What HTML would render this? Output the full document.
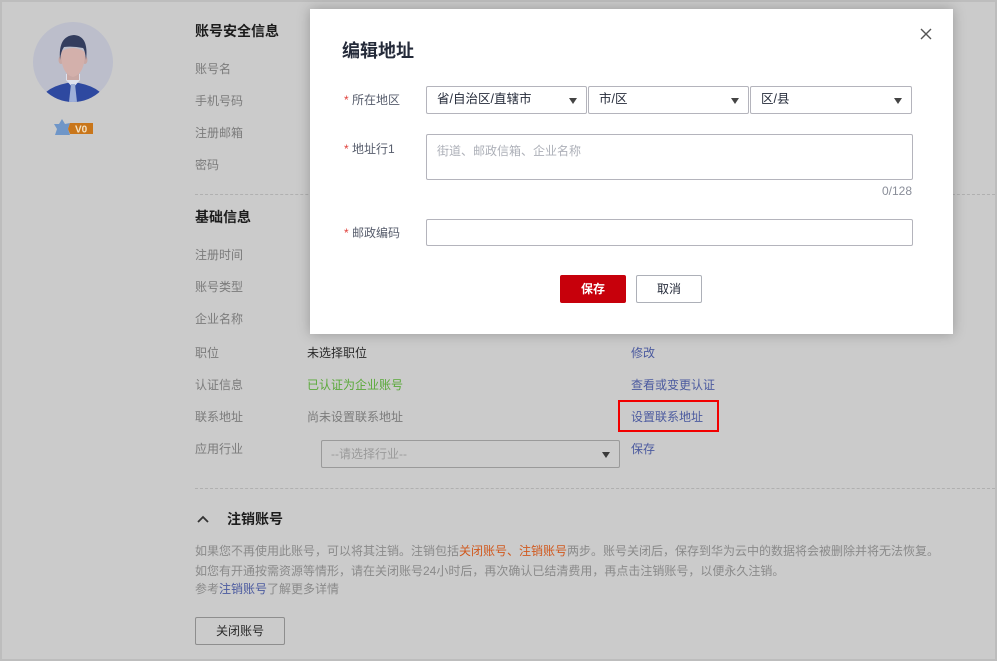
<!DOCTYPE html>
<html><head><meta charset="utf-8">
<style>
*{margin:0;padding:0;box-sizing:border-box}
body{width:997px;height:661px;overflow:hidden;background:#cbcbcb;font-family:"Liberation Sans","Noto Sans CJK SC",sans-serif;font-size:12px;position:relative;color:#7b7b7b}
.frame{position:absolute;left:0;top:0;width:997px;height:661px;border:2px solid #bdbdbd}
.a{position:absolute;white-space:nowrap;line-height:16px}
.h{color:#1c1c1c;font-weight:bold;font-size:14px}
.v{color:#2a2a2a}
.l{color:#4b5a9f}
.dash{position:absolute;height:0;border-top:1px dashed #b0b0b0}
.modal{position:absolute;left:310px;top:9px;width:643px;height:325px;background:#fff;box-shadow:0 0 12px rgba(0,0,0,.25)}
.m{position:absolute;white-space:nowrap;line-height:16px}
.box{position:absolute;border:1px solid #b4b4bc;border-radius:2px;background:#fff}
.sel{color:#252b3a;padding-left:10px;line-height:25px;font-size:12.5px}
.tri{position:absolute;right:9px;top:11px;width:0;height:0;border-left:4.5px solid transparent;border-right:4.5px solid transparent;border-top:6px solid #444}
.star{color:#e0413c}
.lbl{color:#575d6c}
</style></head><body>
<div class="frame"></div>
<svg style="position:absolute;left:33px;top:22px" width="80" height="80" viewBox="0 0 80 80">
<defs><clipPath id="c"><circle cx="40" cy="40" r="40"/></clipPath></defs>
<circle cx="40" cy="40" r="40" fill="#bcbecb"/>
<g clip-path="url(#c)">
<path d="M6 82 Q10 64 40 60 Q70 64 74 82Z" fill="#2e49a0"/>
<path d="M33 58 L40 66 L47 58 L47 52 L33 52Z" fill="#dfe2ee"/>
<path d="M38 62 L42 62 L44 80 L36 80Z" fill="#9fb0d8"/>
<rect x="34" y="44" width="12" height="14" fill="#c9a8a4"/>
<ellipse cx="28" cy="38" rx="2.5" ry="4" fill="#c9a8a4"/>
<ellipse cx="52" cy="38" rx="2.5" ry="4" fill="#c9a8a4"/>
<path d="M28 30 Q28 52 40 55 Q52 52 52 30 Q46 26 40 26 Q32 26 28 30Z" fill="#d3b0ab"/>
<path d="M27 38 Q25 14 41 13 Q56 14 53 38 Q52 28 50 26 Q40 24 31 25 Q28 29 27 38Z" fill="#333d5e"/>
</g></svg>
<svg style="position:absolute;left:53px;top:119px" width="42" height="17">
<path d="M1 5 L6 5 L9 0 L12 5 L17 4 L15 10 L17 16 L2 16 L4 10Z" fill="#6f96c8"/>
<path d="M17 4 L40 4 L40 15 L17 15 L15 10Z" fill="#c9761a"/>
<text x="22" y="13.5" font-family="Liberation Sans" font-weight="bold" font-size="10" fill="#f4e2c4">V0</text>
</svg>

<div class="a h" style="left:195px;top:23px">账号安全信息</div>
<div class="a" style="left:195px;top:61px">账号名</div>
<div class="a" style="left:195px;top:93px">手机号码</div>
<div class="a" style="left:195px;top:125px">注册邮箱</div>
<div class="a" style="left:195px;top:157px">密码</div>
<div class="dash" style="left:195px;top:194px;width:800px"></div>
<div class="a h" style="left:195px;top:209px">基础信息</div>
<div class="a" style="left:195px;top:247px">注册时间</div>
<div class="a" style="left:195px;top:279px">账号类型</div>
<div class="a" style="left:195px;top:311px">企业名称</div>
<div class="a" style="left:195px;top:345px">职位</div>
<div class="a v" style="left:307px;top:345px">未选择职位</div>
<div class="a l" style="left:631px;top:345px">修改</div>
<div class="a" style="left:195px;top:377px">认证信息</div>
<div class="a" style="left:307px;top:377px;color:#5aa93a">已认证为企业账号</div>
<div class="a l" style="left:631px;top:377px">查看或变更认证</div>
<div class="a" style="left:195px;top:409px">联系地址</div>
<div class="a" style="left:307px;top:409px">尚未设置联系地址</div>
<div class="a l" style="left:631px;top:409px">设置联系地址</div>
<div style="position:absolute;left:618px;top:400px;width:101px;height:32px;border:2px solid #f20000"></div>
<div class="a" style="left:195px;top:441px">应用行业</div>
<div style="position:absolute;left:321px;top:440px;width:299px;height:28px;border:1px solid #9a9a9a;border-radius:2px;color:#9a9a9a;padding-left:9px;line-height:26px">--请选择行业--<div class="tri" style="top:11px;border-top-color:#3a3a3a"></div></div>
<div class="a l" style="left:631px;top:441px">保存</div>
<div class="dash" style="left:195px;top:488px;width:800px"></div>
<svg style="position:absolute;left:197px;top:514px" width="12" height="10"><path d="M1 8 L6 3 L11 8" stroke="#333" stroke-width="1.8" fill="none"/></svg>
<div class="a h" style="left:227px;top:511px">注销账号</div>
<div class="a" style="left:195px;top:543px;color:#8a8a8a">如果您不再使用此账号，可以将其注销。注销包括<span style="color:#d0591e">关闭账号、注销账号</span>两步。账号关闭后，保存到华为云中的数据将会被删除并将无法恢复。</div>
<div class="a" style="left:195px;top:563px;color:#8a8a8a">如您有开通按需资源等情形，请在关闭账号24小时后，再次确认已结清费用，再点击注销账号，以便永久注销。</div>
<div class="a" style="left:195px;top:581px;color:#8a8a8a">参考<span style="color:#4b5a9f">注销账号</span>了解更多详情</div>
<div style="position:absolute;left:195px;top:617px;width:90px;height:28px;border:1px solid #8e8e8e;border-radius:2px;color:#2a2a2a;text-align:center;line-height:26px">关闭账号</div>

<div class="modal">
<div class="m" style="left:32px;top:31px;font-size:18px;line-height:22px;font-weight:bold;color:#252b3a">编辑地址</div>
<svg style="position:absolute;left:610px;top:19px" width="12" height="12"><path d="M1 1L11 11M11 1L1 11" stroke="#555" stroke-width="1.4"/></svg>
<div class="m lbl" style="left:34px;top:83px"><span class="star">*</span> 所在地区</div>
<div class="box sel" style="left:116px;top:77px;width:161px;height:28px">省/自治区/直辖市<div class="tri"></div></div>
<div class="box sel" style="left:278px;top:77px;width:161px;height:28px">市/区<div class="tri"></div></div>
<div class="box sel" style="left:440px;top:77px;width:162px;height:28px">区/县<div class="tri"></div></div>
<div class="m lbl" style="left:34px;top:132px"><span class="star">*</span> 地址行1</div>
<div class="box" style="left:116px;top:125px;width:487px;height:46px;color:#adb0b8;padding:8px 10px;line-height:16px">街道、邮政信箱、企业名称</div>
<div class="m" style="left:552px;top:174px;width:50px;text-align:right;color:#8a8e99">0/128</div>
<div class="m lbl" style="left:34px;top:216px"><span class="star">*</span> 邮政编码</div>
<div class="box" style="left:116px;top:210px;width:487px;height:27px"></div>
<div style="position:absolute;left:250px;top:266px;width:66px;height:28px;background:#c7000b;border-radius:2px;color:#fff;text-align:center;line-height:28px;font-weight:bold">保存</div>
<div style="position:absolute;left:326px;top:266px;width:66px;height:28px;border:1px solid #adb0b8;border-radius:2px;color:#252b3a;text-align:center;line-height:26px">取消</div>
</div>
</body></html>
